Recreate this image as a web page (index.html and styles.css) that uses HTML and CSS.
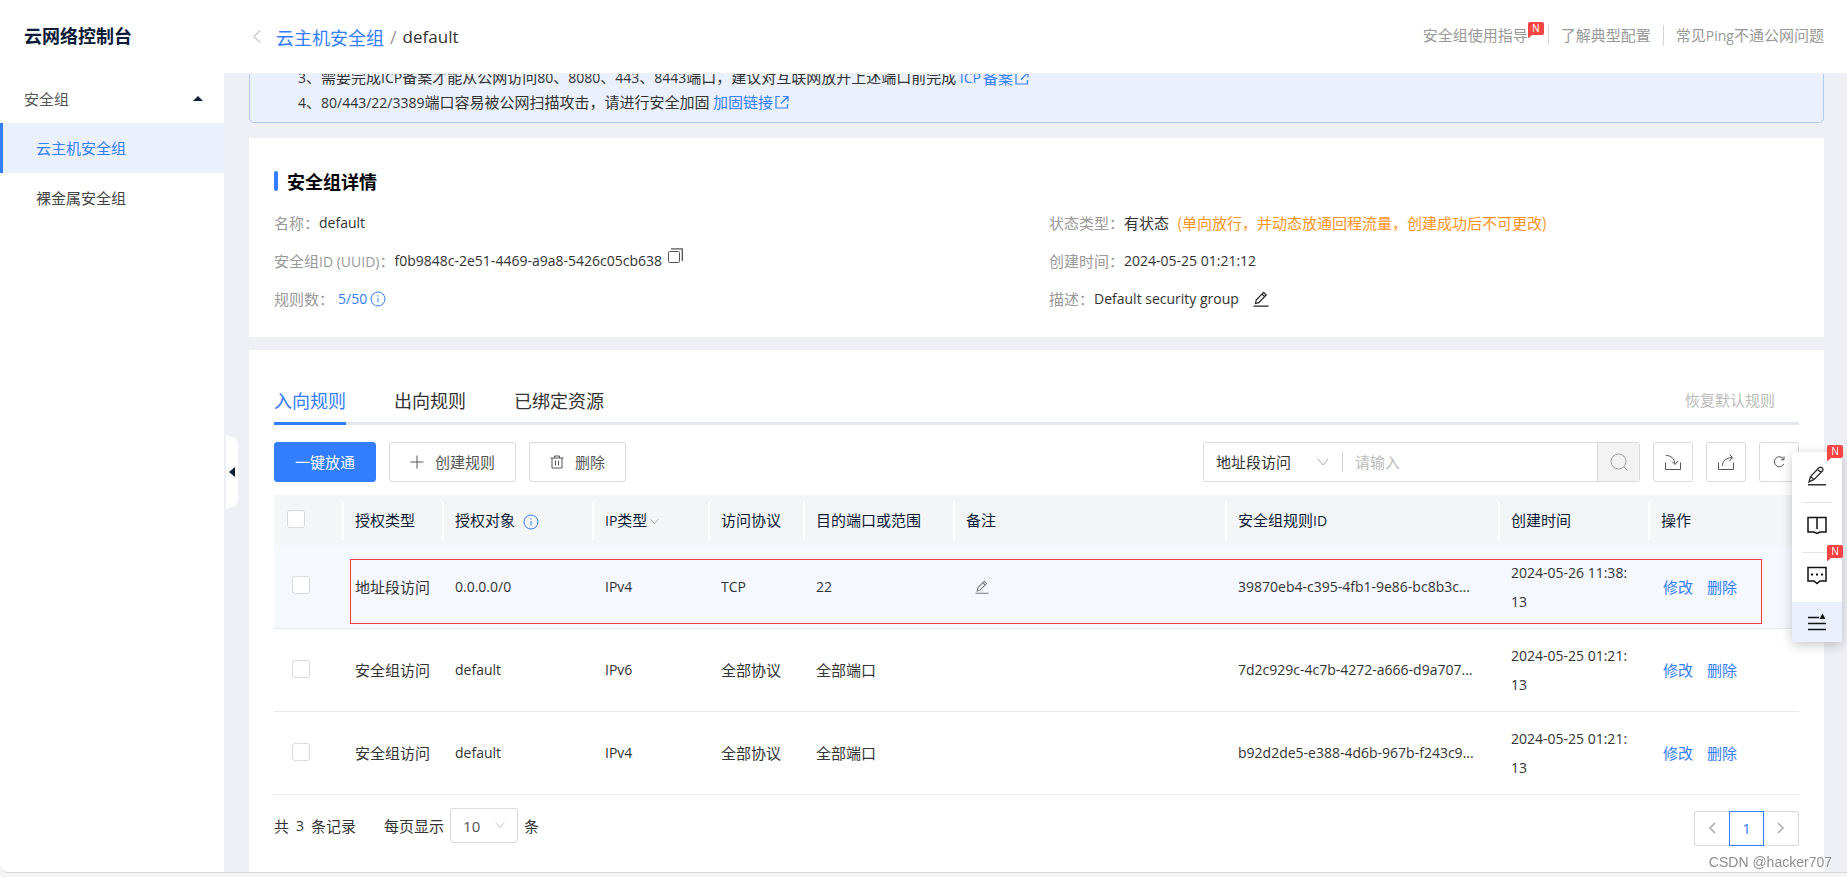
FILE: index.html
```html
<!DOCTYPE html>
<html lang="zh-CN">
<head>
<meta charset="utf-8">
<title>云网络控制台</title>
<link rel="stylesheet" href="styles.css">
</head>
<body>
<svg class="sprite" aria-hidden="true">
  <symbol id="i-pencil" viewBox="0 0 16 16"><path d="M2.5 12.5 3.2 9 10.6 1.4 13.2 4 5.8 11.6ZM9 3l2.6 2.6M0.5 15.2h15" fill="none" stroke="currentColor" stroke-width="1.2"/></symbol>
  <symbol id="i-info" viewBox="0 0 16 16"><circle cx="8" cy="8" r="7" fill="none" stroke="currentColor"/><path d="M8 7v4.5M8 4.2v1.4" stroke="currentColor" fill="none"/></symbol>
  <symbol id="i-down" viewBox="0 0 12 12"><path d="M1 3l5 6 5-6" fill="none" stroke="currentColor"/></symbol>
  <symbol id="i-link" viewBox="0 0 14 14"><path d="M5 1.500H1v11.500h11.500V9M8 1.500h5v5M13 1.500 6 8.500" fill="none" stroke="currentColor" stroke-width="1.200"/></symbol>
  <symbol id="i-flag" viewBox="0 0 16 17"><path d="M2 0h12a2 2 0 0 1 2 2v9a2 2 0 0 1-2 2H4L0 16.500V2a2 2 0 0 1 2-2Z" fill="#fa4444"/></symbol>
</svg>
<div class="app">
  <aside class="sidebar">
    <h1 class="brand">云网络控制台</h1>
    <nav class="menu">
      <button class="menu-group">安全组<svg width="10" height="5" viewBox="0 0 10 5"><path d="M0 5 5 0l5 5Z" fill="#0b1b38"/></svg></button>
      <a class="menu-item active" href="#">云主机安全组</a>
      <a class="menu-item" href="#">裸金属安全组</a>
    </nav>
    <button class="collapse" aria-label="收起"><svg width="6" height="10" viewBox="0 0 6 10"><path d="M6 0v10L0 5Z" fill="#0b1b38"/></svg></button>
  </aside>
  <div class="page">
    <header class="header">
      <div class="crumbs">
        <a class="back" href="#" aria-label="返回"><svg width="8" height="13" viewBox="0 0 8 13"><path d="M7 .5 1 6.500l6 6" fill="none" stroke="#999"/></svg></a>
        <a class="crumb-link" href="#">云主机安全组</a><span class="slash">/</span><span class="crumb-now">default</span>
      </div>
      <nav class="help">
        <a href="#">安全组使用指导<span class="flag"><svg width="16" height="17"><use href="#i-flag"/></svg><b>N</b></span></a>
        <a href="#">了解典型配置</a>
        <a href="#">常见<span class="en">Ping</span>不通公网问题</a>
      </nav>
    </header>
    <main class="main">
      <section class="notice">
        <p><span class="en">3</span>、需要完成<span class="en">ICP</span>备案才能从公网访问<span class="en">80</span>、<span class="en">8080</span>、<span class="en">443</span>、<span class="en">8443</span>端口，建议对互联网放开上述端口前完成 <a href="#"><span class="en">ICP</span>备案<svg width="14" height="14"><use href="#i-link"/></svg></a></p>
        <p><span class="en">4</span>、<span class="en">80/443/22/3389</span>端口容易被公网扫描攻击，请进行安全加固 <a href="#">加固链接<svg width="14" height="14"><use href="#i-link"/></svg></a></p>
      </section>

      <section class="card detail">
        <h2>安全组详情</h2>
        <dl class="facts">
          <div><dt>名称：</dt><dd class="en">default</dd></div>
          <div><dt>状态类型：</dt><dd>有状态<span class="warn">(单向放行，并动态放通回程流量，创建成功后不可更改)</span></dd></div>
          <div><dt>安全组<span class="en">ID (UUID)</span>：</dt><dd class="en">f0b9848c-2e51-4469-a9a8-5426c05cb638</dd><button class="plain copy" aria-label="复制"><svg width="15" height="16" viewBox="0 0 15 16"><rect x=".5" y="3.500" width="11" height="11" rx="1" fill="none" stroke="#555"/><path d="M3 .8h11.300V13" fill="none" stroke="#555" stroke-width="1.300"/></svg></button></div>
          <div><dt>创建时间：</dt><dd class="en">2024-05-25 01:21:12</dd></div>
          <div><dt>规则数：</dt><dd class="en quota">5/50<svg width="16" height="16"><use href="#i-info"/></svg></dd></div>
          <div><dt>描述：</dt><dd class="en">Default security group</dd><button class="plain edit" aria-label="编辑描述"><svg width="16" height="16"><use href="#i-pencil"/></svg></button></div>
        </dl>
      </section>

      <section class="card rules">
        <div class="tabs">
          <button class="tab active">入向规则</button>
          <button class="tab">出向规则</button>
          <button class="tab">已绑定资源</button>
          <button class="reset">恢复默认规则</button>
        </div>
        <div class="toolbar">
          <button class="btn primary">一键放通</button>
          <button class="btn"><svg width="14" height="14" viewBox="0 0 14 14"><path d="M7 .5v13M.5 7h13" stroke="#555" fill="none"/></svg>创建规则</button>
          <button class="btn"><svg width="14" height="14" viewBox="0 0 14 14"><path d="M.5 3h13M4.500 3V1h5v2M2 3v10h10V3M5.500 5.500v5M8.500 5.500v5" stroke="#555" fill="none"/></svg>删除</button>
          <div class="tools">
            <div class="search">
              <span class="pick"><select aria-label="搜索类型"><option>地址段访问</option></select><svg width="12" height="12"><use href="#i-down"/></svg></span>
              <input type="text" placeholder="请输入" aria-label="搜索内容">
              <button aria-label="搜索"><svg width="18" height="18" viewBox="0 0 18 18"><circle cx="8.500" cy="8.500" r="7.500" fill="none" stroke="#999"/><path d="m14 14 3.500 3.500" stroke="#999"/></svg></button>
            </div>
            <button class="btn square" aria-label="导入"><svg width="16" height="16" viewBox="0 0 16 16"><path d="M.5 8.500v7h15v-7M1 1.500c5 0 8.500 3 9 8.500M7 7.500l3 3 3-3.500" fill="none" stroke="#555"/></svg></button>
            <button class="btn square" aria-label="导出"><svg width="16" height="16" viewBox="0 0 16 16"><path d="M.5 8.500v7h15v-7M4.500 12c0-5 3-8 9.500-8.500M11.500.5l3 3-3 3.500" fill="none" stroke="#555"/></svg></button>
            <button class="btn square" aria-label="刷新"><svg width="12" height="12" viewBox="0 0 12 12"><path d="M10.500 3A5 5 0 1 0 10.800 8M11 .5v3.300H7.800" fill="none" stroke="#555"/></svg></button>
          </div>
        </div>

        <div class="table-wrap">
          <table>
            <colgroup><col class="c-check"><col class="c-type"><col class="c-target"><col class="c-ip"><col class="c-proto"><col class="c-port"><col><col class="c-id"><col class="c-time"><col class="c-op"></colgroup>
            <thead>
              <tr>
                <th><input type="checkbox" aria-label="全选"></th>
                <th>授权类型</th>
                <th>授权对象<svg class="th-info" width="16" height="16"><use href="#i-info"/></svg></th>
                <th><span class="en">IP</span>类型<svg class="th-down" width="9" height="9"><use href="#i-down"/></svg></th>
                <th>访问协议</th><th>目的端口或范围</th><th>备注</th>
                <th>安全组规则<span class="en">ID</span></th><th>创建时间</th><th>操作</th>
              </tr>
            </thead>
            <tbody>
              <tr class="hover">
                <td><input type="checkbox" aria-label="选择规则 39870eb4"></td>
                <td>地址段访问</td><td class="en">0.0.0.0/0</td><td class="en">IPv4</td><td class="en">TCP</td><td class="en">22</td>
                <td><button class="plain remark" aria-label="编辑备注"><svg width="14" height="14"><use href="#i-pencil"/></svg></button></td>
                <td class="en">39870eb4-c395-4fb1-9e86-bc8b3c...</td><td class="en time">2024-05-26 11:38:<br>13</td>
                <td class="ops"><a href="#">修改</a><a href="#">删除</a></td>
              </tr>
              <tr>
                <td><input type="checkbox" aria-label="选择规则 7d2c929c"></td>
                <td>安全组访问</td><td class="en">default</td><td class="en">IPv6</td><td>全部协议</td><td>全部端口</td><td></td>
                <td class="en">7d2c929c-4c7b-4272-a666-d9a707...</td><td class="en time">2024-05-25 01:21:<br>13</td>
                <td class="ops"><a href="#">修改</a><a href="#">删除</a></td>
              </tr>
              <tr>
                <td><input type="checkbox" aria-label="选择规则 b92d2de5"></td>
                <td>安全组访问</td><td class="en">default</td><td class="en">IPv4</td><td>全部协议</td><td>全部端口</td><td></td>
                <td class="en">b92d2de5-e388-4d6b-967b-f243c9...</td><td class="en time">2024-05-25 01:21:<br>13</td>
                <td class="ops"><a href="#">修改</a><a href="#">删除</a></td>
              </tr>
            </tbody>
          </table>
          <div class="mark"></div>
        </div>

        <div class="footer">
          <span class="total">共<span class="en">3</span>条记录</span>
          <label for="size">每页显示</label>
          <span class="size"><select id="size"><option>10</option></select><svg width="10" height="10"><use href="#i-down"/></svg></span>
          <span>条</span>
          <nav class="pager">
            <button aria-label="上一页"><svg width="8" height="12" viewBox="0 0 8 12"><path d="M7 1 2 6l5 5" fill="none" stroke="#aaa" stroke-width="1.500"/></svg></button>
            <button class="current">1</button>
            <button aria-label="下一页"><svg width="8" height="12" viewBox="0 0 8 12"><path d="m1 1 5 5-5 5" fill="none" stroke="#aaa" stroke-width="1.500"/></svg></button>
          </nav>
        </div>
      </section>
    </main>
  </div>
</div>

<div class="float">
  <button aria-label="反馈"><svg width="20" height="20" viewBox="0 0 20 20"><path d="M2 16 3.500 10.500 12 1.800Q13.500.6 15 1.800T15.600 4.800L7 13.500ZM10.500 3.500l3.500 3M3.500 10.500 7 13.500M1 18.800h18" fill="none" stroke="#333" stroke-width="1.400"/></svg><span class="flag"><svg width="16" height="17"><use href="#i-flag"/></svg><b>N</b></span></button>
  <button aria-label="文档"><svg width="20" height="19" viewBox="0 0 20 19"><path d="M1 1.500h18V16h-6l-3 1.500L7 16H1ZM10 2v11" fill="none" stroke="#111" stroke-width="1.500"/></svg></button>
  <button aria-label="咨询"><svg width="20" height="19" viewBox="0 0 20 19"><path d="M1 1.500h18V15h-6l-3 2.500L7 15H1Z" fill="none" stroke="#111" stroke-width="1.500"/><path d="M4 8.500h2M9 8.500h2M14 8.500h2" stroke="#111" stroke-width="1.800"/></svg><span class="flag"><svg width="16" height="17"><use href="#i-flag"/></svg><b>N</b></span></button>
  <button class="on" aria-label="收起工具栏"><svg width="18" height="18" viewBox="0 0 18 18"><path d="M0 4.500h11M0 10.500h18M0 16.500h18" stroke="#111" stroke-width="1.600"/><path d="m14.500.5 3 5.500h-6Z" fill="#111"/></svg></button>
</div>
<div class="credit">CSDN @hacker707</div>
</body>
</html>
```
FILE: styles.css
```css
* { box-sizing: border-box; }
body, h1, h2, p, dl, dd { margin: 0; }
body {
  background: #f5f5f5;
  color: #333;
  font: 15px/24px "Noto Sans CJK SC", sans-serif;
}
a { color: #337dff; text-decoration: none; }
button, input, select { font: inherit; color: inherit; }
button { background: none; border: 0; padding: 0; }
svg { flex: none; }
.sprite { position: absolute; width: 0; height: 0; }
.en { font-family: "Open Sans", "Noto Sans CJK SC", sans-serif; font-size: 14px; }

.app {
  display: flex;
  height: calc(100vh - 4px);
  border-bottom: 1px solid #d8d8d8;
  border-bottom-left-radius: 8px;
  background: #fff;
  overflow: hidden;
}
.sidebar { position: relative; flex: 0 0 224px; }
.brand { padding: 0 24px; font-size: 18px; line-height: 71px; height: 74px; color: #0b1b38; }
.menu-group {
  display: flex; align-items: center; justify-content: space-between;
  width: 100%; height: 49px; padding: 0 21px 0 24px; color: #555;
}
.menu-item {
  display: flex; align-items: center; height: 50px; padding-left: 33px;
  border-left: 3px solid transparent; color: #444;
}
.menu-item.active { background: #eaf0fc; border-color: #337dff; color: #337dff; }
.collapse {
  position: absolute; z-index: 2; left: 226px; top: 435px; width: 12px; height: 74px;
  background: #fff; clip-path: polygon(0 0, 75% 4%, 100% 10%, 100% 90%, 75% 96%, 0 100%);
  display: flex; align-items: center; justify-content: center;
}

.page { flex: 1; min-width: 0; display: flex; flex-direction: column; background: #eff0f5; }
.header {
  flex: 0 0 74px; display: flex; justify-content: space-between; align-items: center;
  padding: 0 23px 0 29px; background: #fff; border-bottom: 1px solid #f0f0f0;
}
.crumbs { display: flex; align-items: center; font-size: 18px; }
.back { display: flex; margin-right: 15px; }
.slash { margin: 0 6px; color: #999; font-family: "Open Sans", sans-serif; }
.crumb-now { font-family: "Open Sans", sans-serif; font-size: 17px; }
.help { display: flex; align-items: center; padding-bottom: 3px; }
.help a { position: relative; color: #999; line-height: 20px; }
.help a + a { margin-left: 12px; padding-left: 12px; border-left: 1px solid #d5d5d5; }
.help a:first-child { margin-right: 8px; }
.flag { position: absolute; display: block; width: 16px; height: 17px; color: #fff; }
.flag svg { display: block; }
.flag b {
  position: absolute; left: 0; top: 0; width: 16px; text-align: center;
  font: 10px/13px "Liberation Sans", sans-serif;
}
.help .flag { left: 105px; top: -3px; }

.main { flex: 1; min-height: 0; overflow: hidden; display: flex; flex-direction: column; padding: 0 23px 0 25px; }
.notice {
  flex: none; margin-top: -9px; padding: 0 48px 7px;
  background: #eaf0fc; border: 1px solid #b3cbf7; border-top: 0; border-radius: 0 0 5px 5px;
}
.notice a { display: inline-flex; align-items: center; gap: 2px; }
.card { flex: none; background: #fff; padding-left: 25px; }
.detail { margin-top: 15px; padding-top: 31px; padding-bottom: 19px; }
.detail h2 {
  display: flex; align-items: center; gap: 9px; font-size: 18px; line-height: 24px; color: #000;
}
.detail h2::before { content: ""; width: 4px; height: 20px; border-radius: 2px; background: #337dff; }
.facts { display: grid; grid-template-columns: 1fr 1fr; padding-top: 11px; }
.facts > div { display: flex; align-items: center; height: 38px; }
.facts dt { color: #999; }
.warn { margin-left: 8px; color: #ff931f; }
.plain { display: flex; }
.copy { margin-left: 6px; padding-bottom: 10px; }
.edit { margin-left: 14px; color: #222; }
.quota { display: flex; align-items: center; gap: 3px; margin-left: 4px; color: #337dff; }

.rules { flex: 1; margin-top: 13px; padding-right: 25px; }
.tabs { display: flex; gap: 48px; margin-top: 28px; height: 47px; border-bottom: 3px solid #e4e7ef; }
.tab { font-size: 18px; height: 47px; line-height: 44px; padding-bottom: 2px; border-bottom: 3px solid transparent; }
.tab.active { color: #337dff; border-color: #337dff; }
.reset { margin-left: auto; padding-right: 24px; color: #bbb; }
.toolbar { display: flex; gap: 13px; margin-top: 17px; }
.btn {
  display: flex; align-items: center; justify-content: center; gap: 11px;
  height: 40px; padding: 0 20px; border: 1px solid #d9d9d9; border-radius: 3px; background: #fff; color: #555;
}
.btn.primary { background: #337dff; border-color: #337dff; color: #fff; }
.btn.square { width: 40px; padding: 0; }
.tools { display: flex; gap: 13px; margin-left: auto; }
.search { display: flex; align-items: center; width: 437px; height: 40px; border: 1px solid #d9d9d9; border-radius: 3px; }
.pick { position: relative; width: 139px; height: 20px; border-right: 1px solid #d0d0d0; line-height: 20px; }
.pick select, .size select { appearance: none; border: 0; background: none; width: 100%; padding: 0 0 0 12px; outline: 0; }
.pick select { line-height: 20px; height: 20px; }
.pick svg { position: absolute; right: 13px; top: 4px; color: #aaa; pointer-events: none; }
.search input { flex: 1; min-width: 0; border: 0; outline: 0; padding: 0 12px; }
.search input::placeholder { color: #bbb; }
.search button {
  align-self: stretch; width: 42px; display: flex; align-items: center; justify-content: center;
  border-left: 1px solid #d9d9d9; background: #f3f3f3;
}

.table-wrap { position: relative; margin-top: 13px; }
table { width: 100%; table-layout: fixed; border-collapse: separate; border-spacing: 0; }
.c-check { width: 70px; }
.c-type { width: 100px; }
.c-target { width: 150px; }
.c-ip { width: 116px; }
.c-proto { width: 95px; }
.c-port { width: 150px; }
.c-id { width: 273px; }
.c-time { width: 150px; }
.c-op { width: 149px; }
th {
  height: 50px; padding: 0 0 0 11px; text-align: left; font-weight: 400; color: #0b1b38;
  background: linear-gradient(#fff, #fff) right 7px / 2px 38px no-repeat #f3f5f7;
}
th:last-child { background: #f3f5f7; }
th:first-child { padding-left: 13px; }
td { height: 83px; padding: 0 0 0 11px; border-bottom: 1px solid #e8e9ec; white-space: nowrap; }
td:first-child { padding-left: 18px; }
.hover td { height: 84px; background: #f5f9ff; }
.time { line-height: 29px; }
td.ops { padding-left: 13px; }
.ops a { margin-right: 14px; }
input[type="checkbox"] {
  appearance: none; display: block; width: 18px; height: 18px; margin: 0 0 3px;
  border: 1px solid #d9d9d9; border-radius: 3px; background: #fff;
}
.th-info { margin-left: 8px; vertical-align: -4px; color: #337dff; }
.th-down { margin-left: 3px; color: #999; }
.remark { margin-left: 9px; color: #777; }
.mark { position: absolute; left: 76px; right: 37px; top: 64px; height: 65px; border: 1px solid #f03c3c; pointer-events: none; }

.footer { display: flex; align-items: center; height: 61px; }
.total { display: flex; gap: 7px; margin-right: 28px; }
.size { position: relative; width: 68px; height: 35px; margin: 0 6px; border: 1px solid #d9d9d9; border-radius: 3px; }
.size select { height: 33px; font: 15px "Open Sans", sans-serif; color: #555; }
.size svg { position: absolute; right: 12px; top: 11px; color: #bbb; pointer-events: none; }
.pager { display: flex; margin-left: auto; padding-top: 5px; }
.pager button {
  display: flex; align-items: center; justify-content: center; width: 35px; height: 35px;
  border: 1px solid #d9d9d9; font: 15px "Open Sans", sans-serif;
}
.pager button:first-child { border-right: 0; border-radius: 3px 0 0 3px; }
.pager button:last-child { border-left: 0; border-radius: 0 3px 3px 0; }
.pager .current { border-color: #337dff; color: #337dff; }

.float {
  position: fixed; right: 5px; top: 452px; width: 50px; border-radius: 4px;
  background: #fff; box-shadow: 0 3px 12px rgba(0, 0, 0, .22);
}
.float button { position: relative; display: flex; align-items: center; justify-content: center; width: 50px; height: 50px; padding-bottom: 3px; }
.float button + button:not(.on)::before {
  content: ""; position: absolute; left: 10px; right: 10px; top: 0; height: 1px; background: #e5e5e5;
}
.float button.on { height: 40px; padding-bottom: 1px; background: #eaf0fe; }
.float .flag { right: -1px; top: -7px; }
.credit {
  position: fixed; right: 15px; bottom: 4px; color: #8c8c8c;
  font: 14px/22px "Liberation Sans", sans-serif; text-shadow: 1px 1px 0 #fff;
}
```
